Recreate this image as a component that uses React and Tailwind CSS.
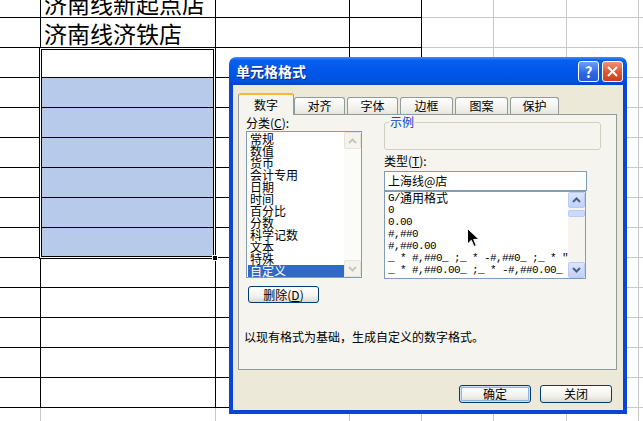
import React from 'react'

const colClasses = ['w-[41px]', 'w-[175px]', 'w-[134px]', 'w-[72px]', 'w-[72px]', 'w-[73px]', 'w-[72px]', 'w-[72px]']

const cellText = {
  '0-1': '济南线新起点店',
  '1-1': '济南线济铁店',
}

function Sheet() {
  const rows = Array.from({ length: 15 }, (_, i) => i)
  return (
    <div className="-mt-[12px]">
      {rows.map((r) => (
        <div key={r} className="flex h-[30px]">
          {colClasses.map((w, c) => {
            const dark = r <= 13 && c <= 3
            const blue = c === 1 && r >= 3 && r <= 8
            return (
              <div
                key={c}
                className={`${w} shrink-0 border-r border-b ${dark ? 'border-black' : 'border-[#c8c8c8]'} ${blue ? 'bg-[#b7caea]' : 'bg-white'} flex items-end pl-[3px] pb-[2px] overflow-hidden whitespace-nowrap text-[23px] leading-none text-black`}
              >
                {cellText[`${r}-${c}`]}
              </div>
            )
          })}
        </div>
      ))}
    </div>
  )
}

function Chevron({ up, color }) {
  return (
    <svg width="9" height="6" viewBox="0 0 9 6">
      <path d={up ? 'M1 5 L4.5 1.5 L8 5' : 'M1 1 L4.5 4.5 L8 1'} fill="none" stroke={color} strokeWidth="2" />
    </svg>
  )
}

function XpButton({ children, def }) {
  return (
    <div
      className={`w-[72px] h-[18px] rounded-[3px] border border-[#003c74] bg-[linear-gradient(to_bottom,#ffffff,#f3f2ed_60%,#dcd8cc)] flex items-center justify-center text-[12px] leading-none text-black ${def ? 'shadow-[inset_0_0_0_1px_#cee0fa,inset_0_0_0_2px_#8fb2e8]' : ''}`}
    >
      {children}
    </div>
  )
}

const categories = ['常规', '数值', '货币', '会计专用', '日期', '时间', '百分比', '分数', '科学记数', '文本', '特殊', '自定义']

const formats = [
  ['G/', '通用格式'],
  ['0'],
  ['0.00'],
  ['#,##0'],
  ['#,##0.00'],
  ['_ * #,##0_ ;_ * -#,##0_ ;_ * "'],
  ['_ * #,##0.00_ ;_ * -#,##0.00_ '],
]

function Dialog() {
  const tabs = [
    { label: '对齐', cls: 'w-[51px]' },
    { label: '字体', cls: 'w-[51px] ml-[2px]' },
    { label: '边框', cls: 'w-[53px] ml-[2px]' },
    { label: '图案', cls: 'w-[53px] ml-[2px]' },
    { label: '保护', cls: 'w-[49px] ml-[2px]' },
  ]

  return (
    <div className="absolute left-[229px] top-[57px] w-[398px] h-[357px] flex flex-col">
      {/* title bar */}
      <div className="h-[28px] rounded-t-[7px] bg-[linear-gradient(to_bottom,#3d8ff8_0%,#0b5fea_12%,#0058ee_45%,#0052e0_85%,#0843c6_100%)] flex items-center pl-[7px] pr-[4px]">
        <span className="text-white font-bold text-[14px] leading-none [text-shadow:1px_1px_0_#0a2a8a]">单元格格式</span>
        <div className="ml-auto flex gap-[3px]">
          <div className="w-[21px] h-[21px] rounded-[3px] border border-white bg-[linear-gradient(to_bottom,#6e9ef9,#2d66e4_60%,#245ad6)] flex items-center justify-center text-white font-bold text-[15px] leading-none">
            ?
          </div>
          <div className="w-[21px] h-[21px] rounded-[3px] border border-white bg-[linear-gradient(to_bottom,#f09477,#dd5530_55%,#c8401d)] flex items-center justify-center">
            <svg width="11" height="11" viewBox="0 0 11 11">
              <path d="M1 1 L10 10 M10 1 L1 10" stroke="#fff" strokeWidth="2" />
            </svg>
          </div>
        </div>
      </div>

      {/* body */}
      <div className="flex-1 border-x-4 border-b-4 border-[#0a46d6] bg-[#ece9d8] pl-[5px] pt-[8px] text-[12px] text-black">
        <div className="flex items-end h-[21px] relative z-10">
          <div className="w-[56px] h-[22px] -mb-px rounded-t-[3px] border-x border-[#919b9c] border-t-2 border-t-[#f5b63f] bg-[#f5f4ef] flex items-center justify-center leading-none">
            数字
          </div>
          {tabs.map((t) => (
            <div
              key={t.label}
              className={`${t.cls} h-[17px] rounded-t-[3px] border border-b-0 border-[#919b9c] bg-[linear-gradient(to_bottom,#ffffff,#f0efea_70%,#e6e4dc)] flex items-center justify-center leading-none`}
            >
              {t.label}
            </div>
          ))}
        </div>

        <div className="w-[379px] h-[256px] border border-[#919b9c] bg-[#f5f4ef]">
          <div className="flex pl-[7px]">
            {/* left column */}
            <div className="w-[116px]">
              <div className="h-[16px] leading-[16px]">
                分类(<span className="underline">C</span>):
              </div>
              <div className="h-[147px] border border-[#7f9db9] bg-white flex">
                <div className="flex-1 pt-px pl-px">
                  {categories.map((c, i) => (
                    <div
                      key={c}
                      className={`h-[12px] leading-[12px] pl-[2px] ${i === categories.length - 1 ? 'bg-[#316ac5] text-white' : ''}`}
                    >
                      {c}
                    </div>
                  ))}
                </div>
                <div className="w-[17px] bg-[#fbfbf9] flex flex-col justify-between">
                  <div className="h-[17px] rounded-[2px] border border-[#e6e4da] bg-[#f4f3ee] flex items-center justify-center">
                    <Chevron up color="#c9c7ba" />
                  </div>
                  <div className="h-[17px] rounded-[2px] border border-[#e6e4da] bg-[#f4f3ee] flex items-center justify-center">
                    <Chevron color="#c9c7ba" />
                  </div>
                </div>
              </div>
              <div className="mt-[8px] ml-[2px] w-[71px] h-[17px] rounded-[3px] border border-[#003c74] bg-[linear-gradient(to_bottom,#ffffff,#f3f2ed_60%,#dcd8cc)] flex items-center justify-center leading-none">
                删除(<span className="underline">D</span>)
              </div>
            </div>

            {/* right column */}
            <div className="ml-[22px] w-[217px]">
              <fieldset className="mt-px h-[34px] border border-[#d0d0bf] rounded-[3px]">
                <legend className="ml-[4px] px-[1px] text-[12px] leading-[12px] text-[#0046d5]">示例</legend>
              </fieldset>
              <div className="mt-[4px] h-[14px] leading-[14px]">
                类型(<span className="underline">T</span>):
              </div>
              <div className="mt-[3px] w-[203px] h-[20px] border border-[#7f9db9] bg-white pl-[3px] flex items-center leading-none">
                上海线@店
              </div>
              <div className="w-[202px] h-[88px] border border-[#7f9db9] bg-white flex">
                <div className="flex-1 overflow-hidden pl-[3px] whitespace-nowrap">
                  {formats.map((f, i) => (
                    <div key={i} className="h-[12px] leading-[12px] flex items-center">
                      <span className="font-['Liberation_Mono',monospace] text-[11px] tracking-[-0.6px]">{f[0]}</span>
                      {f[1] && <span>{f[1]}</span>}
                    </div>
                  ))}
                </div>
                <div className="w-[17px] bg-[#f5f4ef] flex flex-col">
                  <div className="h-[16px] rounded-[2px] border border-[#b9cbf5] bg-[linear-gradient(to_bottom,#dbe6fd,#bfd1fa)] flex items-center justify-center">
                    <Chevron up color="#4d6185" />
                  </div>
                  <div className="mt-[2px] h-[7px] rounded-[2px] border border-[#b9cbf5] bg-[#cbdafb]" />
                  <div className="mt-auto h-[16px] rounded-[2px] border border-[#b9cbf5] bg-[linear-gradient(to_bottom,#dbe6fd,#bfd1fa)] flex items-center justify-center">
                    <Chevron color="#4d6185" />
                  </div>
                </div>
              </div>
            </div>
          </div>

          <div className="mt-[27px] pl-[5px] h-[14px] leading-[14px]">以现有格式为基础，生成自定义的数字格式。</div>
        </div>

        <div className="mt-[15px] flex justify-end pr-[11px] gap-[9px]">
          <XpButton def>确定</XpButton>
          <XpButton>关闭</XpButton>
        </div>
      </div>
    </div>
  )
}

export default function App() {
  return (
    <div className="relative w-[643px] h-[421px] overflow-hidden bg-white font-['Noto_Sans_CJK_SC',sans-serif]">
      <Sheet />

      {/* selection frame */}
      <div className="absolute left-[39px] top-[47px] w-[177px] h-[212px] border border-black">
        <div className="h-full border border-white">
          <div className="h-full border border-black" />
        </div>
      </div>
      <div className="absolute left-[212px] top-[255px] w-[6px] h-[6px] bg-black border border-white" />

      <Dialog />

      {/* mouse cursor */}
      <svg className="absolute left-[467px] top-[228px]" width="13" height="20" viewBox="0 0 13 20">
        <path d="M0.5 0.5 L0.5 16 L4.3 12.3 L7 18.5 L9.3 17.5 L6.7 11.4 L12 11.4 Z" fill="#000" stroke="#fff" strokeWidth="1" />
      </svg>
    </div>
  )
}
